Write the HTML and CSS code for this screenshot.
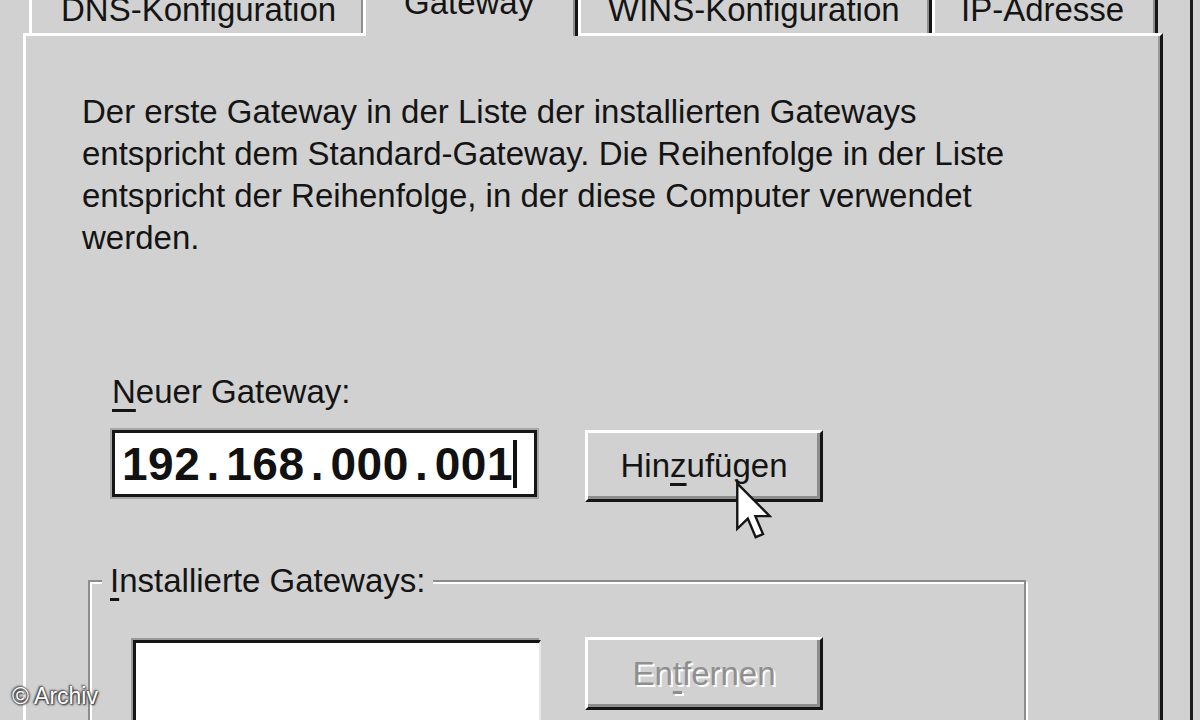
FILE: index.html
```html
<!DOCTYPE html>
<html lang="de">
<head>
<meta charset="utf-8">
<title>Gateway</title>
<link rel="stylesheet" href="styles.css">
</head>
<body>
<div class="dialog">
  <div class="tabs">
    <div class="tab tab-dns">DNS-Konfiguration</div>
    <div class="tab tab-gw active">Gateway</div>
    <div class="tab tab-wins">WINS-Konfiguration</div>
    <div class="tab tab-ip">IP-Adresse</div>
  </div>
  <div class="panel">
    <p class="intro">Der erste Gateway in der Liste der installierten Gateways<br>entspricht dem Standard-Gateway. Die Reihenfolge in der Liste<br>entspricht der Reihenfolge, in der diese Computer verwendet<br>werden.</p>
    <div class="new-gw">
      <label class="label"><span class="ak">N</span>euer Gateway:</label>
      <div class="row">
        <div class="field"><span>192</span><span class="dot">.</span><span>168</span><span class="dot">.</span><span>000</span><span class="dot">.</span><span>001</span><span class="caret"></span></div>
        <button class="btn" type="button">Hin<span class="ak">z</span>ufügen</button>
      </div>
    </div>
    <fieldset class="group">
      <legend class="legend"><span class="ak">I</span>nstallierte Gateways:</legend>
      <div class="group-row">
        <div class="list"></div>
        <button class="btn btn-disabled" type="button">En<span class="ak">t</span>fernen</button>
      </div>
    </fieldset>
  </div>
</div>
<svg class="cursor" width="36" height="57" viewBox="0 0 12.8 20.2" aria-hidden="true">
  <path d="M0.45 0.45 L0.45 16.6 L4.2 13 L7 19.6 L9.6 18.5 L6.9 12.1 L12 12.1 Z" fill="#ffffff" stroke="#151515" stroke-width="0.85" stroke-linejoin="miter"/>
</svg>
<div class="credit">© Archiv</div>
</body>
</html>
```

FILE: styles.css
```css
html, body {
  margin: 0;
  padding: 0;
}

body {
  width: 1200px;
  height: 720px;
  overflow: hidden;
  background: #d1d1d1;
  color: #141414;
  font-family: "Liberation Sans", Arial, sans-serif;
  font-size: 33px;
  line-height: 42px;
  position: relative;
}

.dialog {
  box-sizing: border-box;
  width: 1193px;
  height: 720px;
  padding-left: 23px;
  border-right: 3px solid #1a1a1a;
}

/* ---------- tabs ---------- */
.tabs {
  display: flex;
  align-items: flex-end;
  height: 33px;
  padding-left: 6px;
}

.tab {
  box-sizing: border-box;
  flex: none;
  padding-top: 14px;
  padding-bottom: 2px;
  border-top: 3px solid #ffffff;
  border-left: 3px solid #ffffff;
  border-right: 3px solid #151515;
  box-shadow: inset -2px 0 0 #8e8e8e;
  background: #d1d1d1;
  white-space: nowrap;
}

.tab-dns {
  width: 337px;
  padding-left: 29px;
}

.tab-gw {
  width: 215px;
  padding-left: 38px;
}

.tab-wins {
  width: 354px;
  padding-left: 27px;
}

.tab-ip {
  width: 226px;
  padding-left: 26px;
}

.tab.active {
  position: relative;
  z-index: 1;
  margin-left: -3px;
  margin-bottom: -3px;
  padding-bottom: 12px;
}

/* ---------- panel ---------- */
.panel {
  box-sizing: border-box;
  width: 1140px;
  height: 760px;
  padding: 55px 0 0 56px;
  border-top: 3px solid #ffffff;
  border-left: 3px solid #ffffff;
  border-right: 3px solid #151515;
  box-shadow: inset -2px 0 0 #9a9a9a;
}

.intro {
  margin: 0;
  white-space: nowrap;
}

.ak {
  text-decoration: underline;
  text-decoration-thickness: 3px;
  text-underline-offset: 6px;
}

.new-gw {
  margin: 112px 0 0 30px;
}

.label {
  display: block;
  white-space: nowrap;
}

.row {
  display: flex;
  align-items: flex-start;
  gap: 48px;
  margin-top: 17px;
}

.field {
  box-sizing: border-box;
  width: 425px;
  height: 67px;
  padding-left: 7px;
  display: flex;
  align-items: center;
  background: #ffffff;
  border: 3px solid #161616;
  box-shadow: 0 0 0 2px #a6a6a6;
  font-weight: bold;
  font-size: 46px;
  line-height: 48px;
  letter-spacing: 0.5px;
  color: #111111;
  white-space: nowrap;
}

.dot {
  display: inline-block;
  width: 26px;
  text-align: center;
}

.caret {
  display: inline-block;
  width: 4px;
  height: 48px;
  margin-left: 0;
  background: #111111;
}

.btn {
  box-sizing: border-box;
  width: 238px;
  height: 72px;
  margin: 0;
  padding: 0;
  background: #d1d1d1;
  border: 3px solid;
  border-color: #ffffff #151515 #151515 #ffffff;
  box-shadow: inset -3px -3px 0 #8e8e8e;
  font-family: inherit;
  font-size: 33px;
  line-height: 42px;
  color: #141414;
  white-space: nowrap;
}

.btn-disabled {
  color: #8f8f8f;
  text-shadow: 2px 2px 0 #ffffff;
  margin-top: -3px;
  height: 73px;
}

/* ---------- group box ---------- */
.group {
  box-sizing: border-box;
  width: 938px;
  height: 400px;
  margin: 58px 0 0 6px;
  padding: 0;
  border: 2px solid #8c8c8c;
  box-shadow: inset 2px 2px 0 #ffffff, 2px 2px 0 #ffffff;
  min-inline-size: 0;
}

.legend {
  margin-left: 12px;
  padding: 0 8px;
  background: #d1d1d1;
  white-space: nowrap;
}

.group-row {
  display: flex;
  align-items: flex-start;
  gap: 44px;
  margin: 38px 0 0 43px;
}

.list {
  box-sizing: border-box;
  width: 408px;
  height: 160px;
  background: #ffffff;
  border-top: 3px solid #151515;
  border-left: 3px solid #151515;
  border-right: 2px solid #e8e8e8;
  box-shadow: -2px -2px 0 #9a9a9a;
}

/* ---------- overlays ---------- */
.cursor {
  position: absolute;
  left: 736px;
  top: 482px;
}

.credit {
  position: absolute;
  left: 12px;
  top: 680px;
  font-size: 23px;
  line-height: 32px;
  color: #ffffff;
  text-shadow: 0 0 2px #333333, 1px 1px 2px #222222, -1px -1px 2px #444444;
  white-space: nowrap;
}
```
